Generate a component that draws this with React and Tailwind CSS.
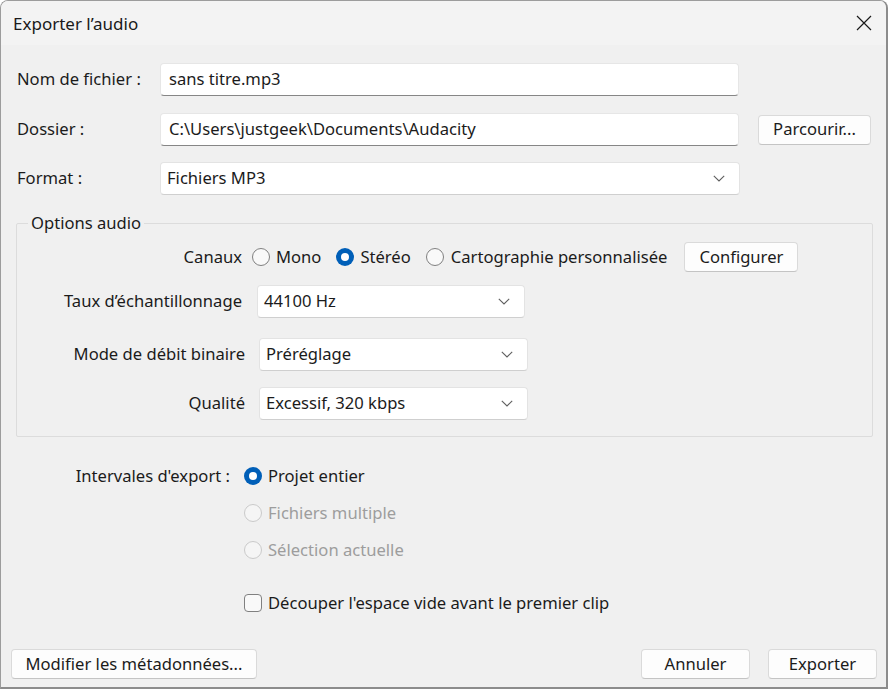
import React from "react";

const font = { fontFamily: '"Segoe UI", "Noto Sans", "Open Sans", sans-serif' };

function Chevron() {
  return (
    <svg width="12" height="7" viewBox="0 0 12 7" className="shrink-0">
      <path d="M0.8 0.8 L6 6 L11.2 0.8" fill="none" stroke="#5f5f5f" strokeWidth="1.1" />
    </svg>
  );
}

function Radio({ checked, disabled }) {
  if (checked) {
    return (
      <span className="w-[18px] h-[18px] rounded-full bg-[#005fb8] flex items-center justify-center shrink-0">
        <span className="w-[8px] h-[8px] rounded-full bg-white" />
      </span>
    );
  }
  if (disabled) {
    return <span className="w-[18px] h-[18px] rounded-full border border-[#cacaca] bg-[#f5f5f5] shrink-0" />;
  }
  return <span className="w-[18px] h-[18px] rounded-full border border-[#808080] bg-[#f9f9f9] shrink-0" />;
}

function TextInput({ value, className }) {
  return (
    <div
      className={
        "h-[33px] bg-white border border-[#e6e6e6] border-b-[#868686] rounded-[4px] flex items-center pl-[8px] text-[#1b1b1b] " +
        className
      }
    >
      {value}
    </div>
  );
}

function Select({ value, className }) {
  return (
    <div
      className={
        "h-[33px] bg-white border border-[#e3e3e3] border-b-[#cfcfcf] rounded-[4px] flex items-center justify-between pl-[6px] pr-[14px] text-[#1b1b1b] " +
        className
      }
    >
      <span>{value}</span>
      <Chevron />
    </div>
  );
}

function Button({ children, className }) {
  return (
    <div
      className={
        "h-[30px] bg-[#fdfdfd] border border-[#dadada] border-b-[#c4c4c4] rounded-[4px] flex items-center justify-center text-[#1b1b1b] " +
        className
      }
    >
      {children}
    </div>
  );
}

export default function App() {
  return (
    <div style={font} className="w-[889px] h-[690px] bg-white">
      <div className="w-[888px] h-[689px] bg-[#f0f0f0] border border-[#9c9c9c] border-r-[2px] border-b-[2px] border-r-[#8c8c8c] border-b-[#8c8c8c] rounded-t-[8px] overflow-hidden flex flex-col text-[16.6px] text-[#1b1b1b]">
        {/* Title bar */}
        <div className="h-[44px] bg-[#f3f3f3] flex items-center justify-between pl-[12px] pr-[14px] shrink-0">
          <span className="text-[17px] text-[#1a1a1a] leading-none mt-[1px]">Exporter l’audio</span>
          <svg width="16" height="16" viewBox="0 0 16 16">
            <path d="M1 1 L15 15 M15 1 L1 15" stroke="#1a1a1a" strokeWidth="1.2" />
          </svg>
        </div>

        {/* Body */}
        <div className="flex flex-col pl-[15px] pr-[14px] pt-[18px] flex-1">
          <div className="flex items-center h-[33px]">
            <span className="w-[144px] shrink-0 pl-[1px]">Nom de fichier :</span>
            <TextInput value="sans titre.mp3" className="w-[579px]" />
          </div>
          <div className="flex items-center h-[33px] mt-[17px]">
            <span className="w-[144px] shrink-0 pl-[1px]">Dossier :</span>
            <TextInput value={"C:\\Users\\justgeek\\Documents\\Audacity"} className="w-[579px]" />
            <Button className="w-[113px] ml-[19px] h-[30px]">Parcourir...</Button>
          </div>
          <div className="flex items-center h-[33px] mt-[16px]">
            <span className="w-[144px] shrink-0 pl-[1px]">Format :</span>
            <Select value="Fichiers MP3" className="w-[580px] pl-[4px]" />
          </div>

          {/* Options audio group */}
          <fieldset className="mt-[18px] w-[857px] h-[224px] border border-[#dcdcdc] rounded-[2px] flex flex-col">
            <legend className="ml-[11px] px-[3px] leading-[20px]">Options audio</legend>
            <div className="flex items-center h-[30px] mt-[9px]">
              <span className="w-[225px] text-right shrink-0">Canaux</span>
              <div className="flex items-center ml-[10px] gap-[6px]">
                <Radio />
                <span>Mono</span>
              </div>
              <div className="flex items-center ml-[15px] gap-[6px]">
                <Radio checked />
                <span>Stéréo</span>
              </div>
              <div className="flex items-center ml-[15px] gap-[7px]">
                <Radio />
                <span>Cartographie personnalisée</span>
              </div>
              <Button className="w-[114px] ml-[17px]">Configurer</Button>
            </div>
            <div className="flex items-center h-[33px] mt-[13px]">
              <span className="w-[225px] text-right shrink-0">Taux d’échantillonnage</span>
              <Select value="44100 Hz" className="w-[268px] ml-[15px]" />
            </div>
            <div className="flex items-center h-[33px] mt-[20px]">
              <span className="w-[228px] text-right shrink-0">Mode de débit binaire</span>
              <Select value="Préréglage" className="w-[269px] ml-[14px]" />
            </div>
            <div className="flex items-center h-[33px] mt-[16px]">
              <span className="w-[228px] text-right shrink-0">Qualité</span>
              <Select value="Excessif, 320 kbps" className="w-[269px] ml-[14px]" />
            </div>
          </fieldset>

          {/* Export range */}
          <div className="flex items-start mt-[28px]">
            <span className="w-[214px] text-right shrink-0 leading-[22px]">Intervales d'export :</span>
            <div className="flex flex-col ml-[14px] gap-[15px]">
              <div className="flex items-center gap-[6px] h-[22px]">
                <Radio checked />
                <span>Projet entier</span>
              </div>
              <div className="flex items-center gap-[6px] h-[22px] text-[#9d9d9d]">
                <Radio disabled />
                <span>Fichiers multiple</span>
              </div>
              <div className="flex items-center gap-[6px] h-[22px] text-[#9d9d9d]">
                <Radio disabled />
                <span>Sélection actuelle</span>
              </div>
              <div className="flex items-center gap-[6px] h-[22px] mt-[16px]">
                <span className="w-[18px] h-[18px] rounded-[4px] border border-[#808080] bg-[#f9f9f9] shrink-0" />
                <span>Découper l'espace vide avant le premier clip</span>
              </div>
            </div>
          </div>

          {/* Bottom buttons */}
          <div className="flex items-center mt-auto mb-[8px] -ml-[5px] mr-[-5px]">
            <Button className="w-[246px]">Modifier les métadonnées...</Button>
            <div className="flex-1" />
            <Button className="w-[109px]">Annuler</Button>
            <Button className="w-[109px] ml-[18px] border-[#0067c0] border-b-[#0067c0] border-[1.5px]">Exporter</Button>
          </div>
        </div>
      </div>
    </div>
  );
}
